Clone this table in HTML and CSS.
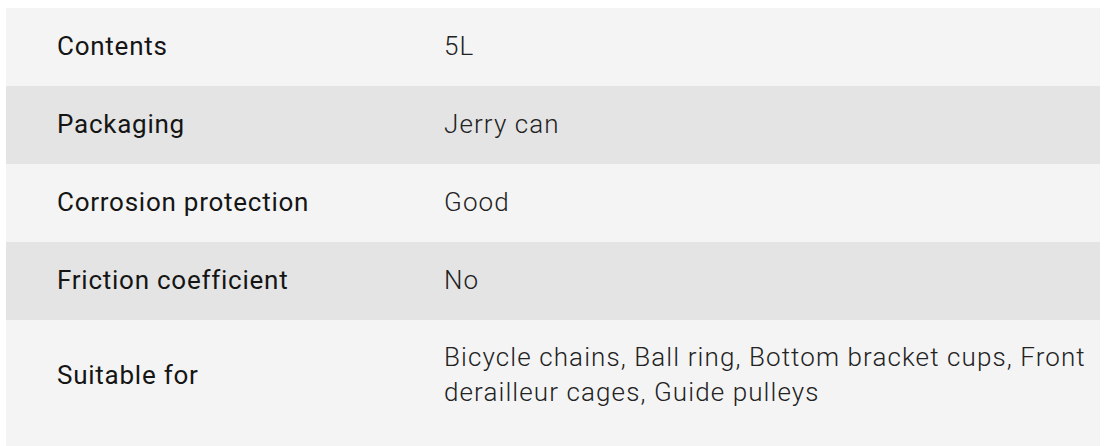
FILE: index.html
```html
<!DOCTYPE html>
<html lang="en">
<head>
<meta charset="utf-8">
<title>Specifications</title>
<link rel="stylesheet" href="styles.css">
</head>
<body>
<div class="specs">
  <div class="row light"><div class="label">Contents</div><div class="value">5L</div></div>
  <div class="row dark"><div class="label">Packaging</div><div class="value">Jerry can</div></div>
  <div class="row light"><div class="label">Corrosion protection</div><div class="value">Good</div></div>
  <div class="row dark"><div class="label">Friction coefficient</div><div class="value">No</div></div>
  <div class="row light last"><div class="label">Suitable for</div><div class="value">Bicycle chains, Ball ring, Bottom bracket cups, Front derailleur cages, Guide pulleys</div></div>
</div>
</body>
</html>
```
FILE: styles.css
```css
html, body {
  margin: 0;
  padding: 0;
  background: #ffffff;
  overflow: hidden;
}
body {
  padding: 8px 4px 0 6px;
  font-family: "Roboto", "Liberation Sans", sans-serif;
  color: #151515;
}
.specs {
  display: flex;
  flex-direction: column;
}
.row {
  display: grid;
  grid-template-columns: 387px 1fr;
  align-items: center;
  padding: 21px 4px 22px 51px;
  line-height: 35px;
  font-size: 26px;
}
.row.light { background: #f4f4f4; }
.row.dark { background: #e4e4e4; }
.row.last { padding-top: 20px; padding-bottom: 50px; }
.label {
  font-weight: 400;
  letter-spacing: 0.75px;
}
.value {
  font-weight: 300;
  letter-spacing: 1.1px;
  color: #222222;
}
```
